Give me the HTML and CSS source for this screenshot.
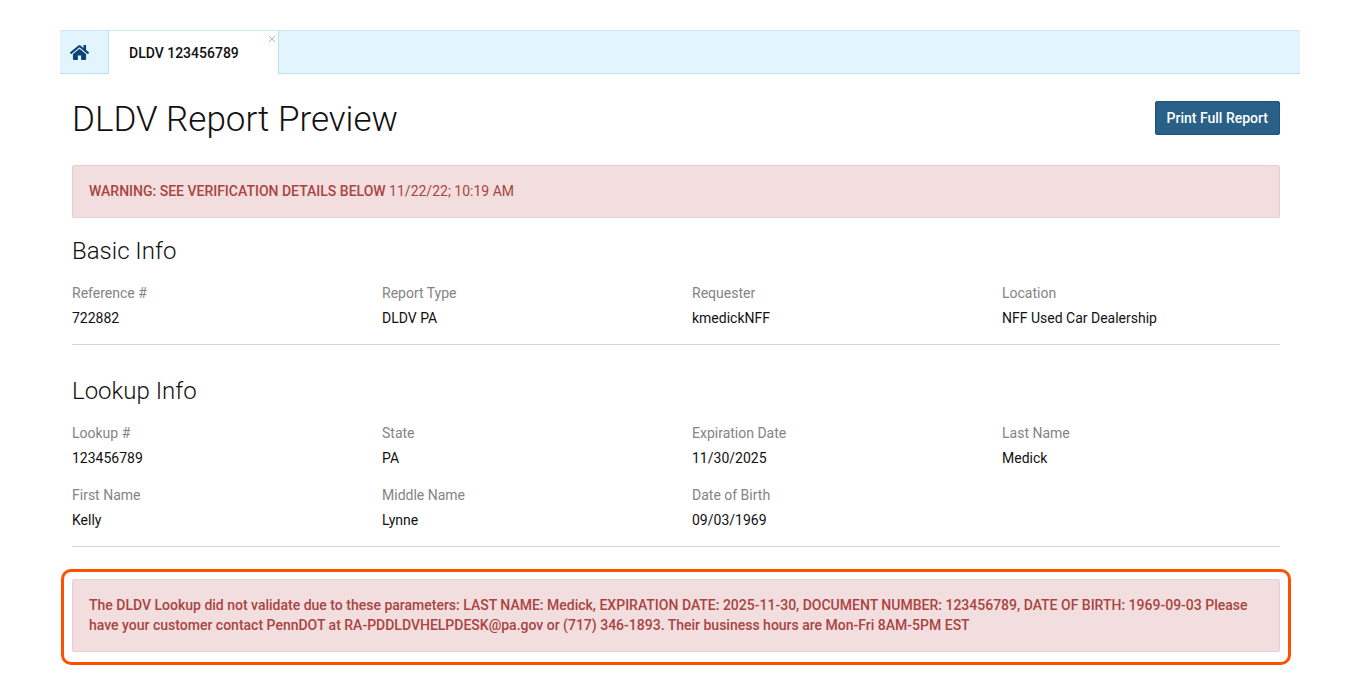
FILE: index.html
```html
<!DOCTYPE html>
<html lang="en">
<head>
    <meta charset="UTF-8">
    <meta name="viewport" content="width=device-width, initial-scale=1.0">
    <title>DLDV Report Preview</title>
    <link rel="stylesheet" href="styles.css">
</head>
<body>
    <nav class="tab-bar">
        <a href="#" class="tab-home" aria-label="Home">
            <svg class="home-icon" viewBox="0 0 576 512" aria-hidden="true">
                <path d="M488 313v143c0 13-11 24-24 24H348c-7 0-12-5-12-12V356c0-7-5-12-12-12h-72c-7 0-12 5-12 12v112c0 7-5 12-12 12H112c-13 0-24-11-24-24V313c0-4 2-7 4-10l188-154c5-4 11-4 16 0l188 154c2 3 4 6 4 10zm84-61l-84-69V44c0-7-5-12-12-12h-56c-7 0-12 5-12 12v73l-90-74c-18-14-43-14-61 0L4 252c-5 4-5 12-1 17l25 31c5 5 12 5 17 1L280 107c5-4 11-4 16 0l235 194c5 4 13 4 17-1l25-31c4-6 4-13-1-17z"/>
            </svg>
        </a>
        <div class="tab active">
            <a href="#report">DLDV 123456789</a>
            <button class="tab-close" aria-label="Close tab">
                <svg viewBox="0 0 8 8" aria-hidden="true"><path d="M1 1l6 6M7 1L1 7"/></svg>
            </button>
        </div>
    </nav>

    <main class="content" id="report">
        <header class="page-header">
            <h1>DLDV Report Preview</h1>
            <button class="btn-primary">Print Full Report</button>
        </header>

        <div class="alert">
            <strong>WARNING: SEE VERIFICATION DETAILS BELOW</strong> 11/22/22; 10:19 AM
        </div>

        <section class="info">
            <h2>Basic Info</h2>
            <dl class="fields">
                <div class="field"><dt>Reference #</dt><dd>722882</dd></div>
                <div class="field"><dt>Report Type</dt><dd>DLDV PA</dd></div>
                <div class="field"><dt>Requester</dt><dd>kmedickNFF</dd></div>
                <div class="field"><dt>Location</dt><dd>NFF Used Car Dealership</dd></div>
            </dl>
        </section>

        <section class="info">
            <h2>Lookup Info</h2>
            <dl class="fields">
                <div class="field"><dt>Lookup #</dt><dd>123456789</dd></div>
                <div class="field"><dt>State</dt><dd>PA</dd></div>
                <div class="field"><dt>Expiration Date</dt><dd>11/30/2025</dd></div>
                <div class="field"><dt>Last Name</dt><dd>Medick</dd></div>
                <div class="field"><dt>First Name</dt><dd>Kelly</dd></div>
                <div class="field"><dt>Middle Name</dt><dd>Lynne</dd></div>
                <div class="field"><dt>Date of Birth</dt><dd>09/03/1969</dd></div>
            </dl>
        </section>

        <div class="highlight">
            <div class="alert">
                <strong>The DLDV Lookup did not validate due to these parameters: LAST NAME: Medick, EXPIRATION DATE: 2025-11-30, DOCUMENT NUMBER: 123456789, DATE OF BIRTH: 1969-09-03 Please have your customer contact PennDOT at RA-PDDLDVHELPDESK@pa.gov or (717) 346-1893. Their business hours are Mon-Fri 8AM-5PM EST</strong>
            </div>
        </div>
    </main>
</body>
</html>
```

FILE: styles.css
```css
* {
    box-sizing: border-box;
}

body {
    margin: 0;
    padding: 30px 60px 28px;
    background: #fff;
    color: #111;
    font-family: Roboto, sans-serif;
    font-size: 14px;
    line-height: 20px;
}

/* Tabs */
.tab-bar {
    display: flex;
    height: 44px;
    background: #e2f5fe;
    border-top: 1px solid #cbe8f4;
    border-bottom: 1px solid #bfdfed;
}

.tab-home {
    display: flex;
    align-items: center;
    padding: 0 19px 0 10px;
}

.home-icon {
    width: 19px;
    height: 17px;
    fill: #0b4475;
}

.tab {
    position: relative;
    display: flex;
    align-items: center;
    margin-bottom: -1px;
    padding: 0 39px 0 20px;
    background: #fff;
    border: solid #bfdfed;
    border-width: 0 1px;
}

.tab a {
    color: #111;
    font-weight: 500;
    text-decoration: none;
}

.tab-close {
    position: absolute;
    top: 4px;
    right: 2px;
    display: flex;
    padding: 0;
    background: none;
    border: none;
    cursor: pointer;
}

.tab-close svg {
    width: 8px;
    height: 8px;
    stroke: #9fbfd2;
    fill: none;
}

/* Report */
.content {
    padding: 26px 20px 0 12px;
}

.page-header {
    display: flex;
    justify-content: space-between;
    align-items: flex-start;
    margin-bottom: 25px;
}

h1, h2 {
    margin: 0;
    font-weight: 300;
}

h1 {
    font-size: 35px;
    line-height: 40px;
}

h2 {
    margin-bottom: 16px;
    font-size: 24px;
    line-height: 32px;
}

.btn-primary {
    height: 34px;
    margin-top: 1px;
    padding: 0 11px;
    background: #286088;
    border: 1px solid #205377;
    border-radius: 2px;
    color: #fff;
    font: 500 14px Roboto, sans-serif;
    cursor: pointer;
}

.alert {
    padding: 15px 16px 16px;
    background: #f2dede;
    border: 1px solid #ebccd1;
    border-radius: 2px;
    color: #a94442;
}

.alert strong {
    font-weight: 500;
}

.info {
    margin-top: 17px;
    border-bottom: 1px solid #d5d5d5;
}

.info + .info {
    margin-top: 30px;
}

.fields {
    display: grid;
    grid-template-columns: repeat(4, 1fr);
    row-gap: 17px;
    margin: 0 -32px 0 0;
    padding-bottom: 16px;
}

dt {
    margin-bottom: 5px;
    color: #848484;
}

dd {
    margin: 0;
}

.highlight {
    margin: 22px -11px 0;
    padding: 7px 8px 10px;
    border: 3px solid #ff4f00;
    border-radius: 10px;
}
```
